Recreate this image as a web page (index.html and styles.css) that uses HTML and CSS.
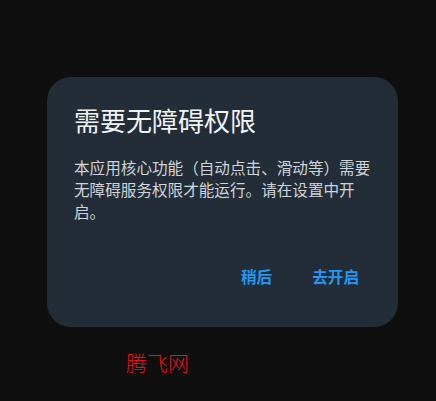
FILE: index.html
```html
<!DOCTYPE html>
<html lang="zh-CN">
<head>
    <meta charset="UTF-8">
    <meta name="viewport" content="width=device-width, initial-scale=1.0">
    <title>需要无障碍权限</title>
    <link rel="stylesheet" href="styles.css">
</head>
<body>
    <div class="screen">
        <div class="dialog">
            <h1 class="dialog-title">需要无障碍权限</h1>
            <p class="dialog-text">本应用核心功能（自动点击、滑动等）需要无障碍服务权限才能运行。请在设置中开启。</p>
            <div class="dialog-actions">
                <button class="btn-later">稍后</button>
                <button class="btn-open">去开启</button>
            </div>
        </div>
        <div class="watermark">腾飞网</div>
    </div>
</body>
</html>
```

FILE: styles.css
```css
body {
    margin: 0;
    padding: 0;
    background-color: #0f0f0f;
    font-family: "Noto Sans CJK SC", "Noto Sans", sans-serif;
}
.screen {
    width: 436px;
    height: 401px;
    box-sizing: border-box;
    padding: 77px 0 0 47px;
}
.dialog {
    width: 351px;
    height: 250px;
    box-sizing: border-box;
    padding: 27px 27px 0 27px;
    background-color: #222d38;
    border-radius: 24px;
}
.dialog-title {
    margin: 0;
    font-size: 26px;
    line-height: 32px;
    font-weight: 400;
    color: #f1f3f5;
}
.dialog-text {
    margin: 20px 0 0 0;
    font-size: 15.6px;
    line-height: 22px;
    color: #d0d4d8;
}
.dialog-actions {
    display: flex;
    justify-content: flex-end;
    gap: 8px;
    margin-top: 36px;
    margin-right: -4px;
}
button {
    height: 36px;
    padding: 0 16px;
    border: none;
    background: none;
    font-family: inherit;
    font-size: 15.6px;
    font-weight: 700;
    color: #2196f3;
    cursor: pointer;
}
.watermark {
    margin: 21px 0 0 79px;
    font-size: 21px;
    line-height: 28px;
    font-weight: 300;
    color: #e0141e;
}
```
